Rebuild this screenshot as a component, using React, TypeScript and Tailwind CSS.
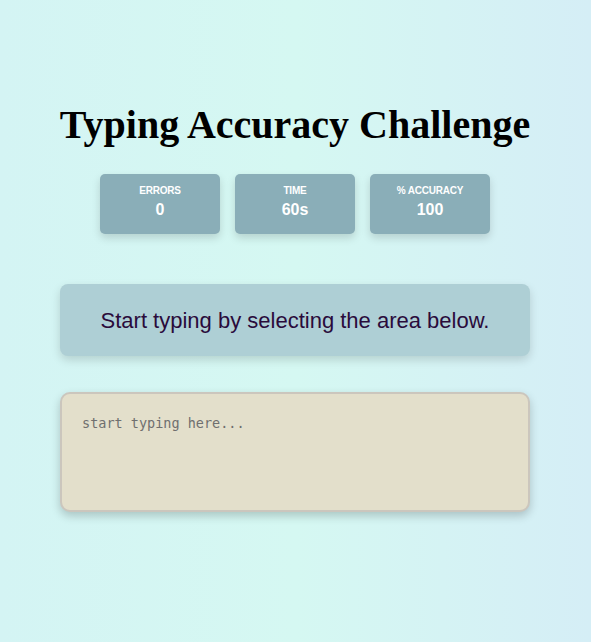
import React from "react";

export default function App() {
  const stats = [
    { label: "ERRORS", value: "0" },
    { label: "TIME", value: "60s" },
    { label: "% ACCURACY", value: "100" },
  ];
  return (
    <div className="min-h-[642px] w-[590px] bg-[linear-gradient(to_right,#d4f4f4,#d5f8f2_50%,#d5eef6)] flex flex-col items-center pt-[100px] shadow-[1px_0_0_#d5eef6]">
      <h1 className="text-[40px] font-bold leading-[50px] text-black" style={{ fontFamily: '"Liberation Serif", serif' }}>
        Typing Accuracy Challenge
      </h1>
      <div className="flex gap-[15px] mt-[24px]" style={{ fontFamily: '"Liberation Sans", Arial, sans-serif' }}>
        {stats.map((s) => (
          <div
            key={s.label}
            className="w-[120px] h-[60px] rounded-[5px] bg-[#8aaeb8] text-white flex flex-col items-center pt-[11px] shadow-[0_4px_8px_rgba(0,0,0,0.15)]"
          >
            <div className="text-[10px] font-bold leading-[12px] tracking-[-0.2px]">{s.label}</div>
            <div className="text-[16px] font-bold leading-[20px] mt-[3px]">{s.value}</div>
          </div>
        ))}
      </div>
      <div
        className="mt-[50px] w-[470px] h-[72px] rounded-[8px] bg-[#aecfd5] flex items-center justify-center text-[22px] text-[#2a0b3b] shadow-[0_4px_10px_rgba(0,0,0,0.15)]"
        style={{ fontFamily: '"Liberation Sans", Arial, sans-serif' }}
      >
        Start typing by selecting the area below.
      </div>
      <textarea
        placeholder="start typing here..."
        className="mt-[36px] w-[470px] h-[120px] rounded-[10px] bg-[#e3dfcb] border-2 border-[#cbc6bd] px-[20px] py-[20px] text-[13.5px] leading-[18px] resize-none outline-none placeholder:text-[#6f6f6f] shadow-[0_4px_10px_rgba(0,0,0,0.2)]"
        style={{ fontFamily: '"DejaVu Sans Mono", monospace' }}
      />
    </div>
  );
}
